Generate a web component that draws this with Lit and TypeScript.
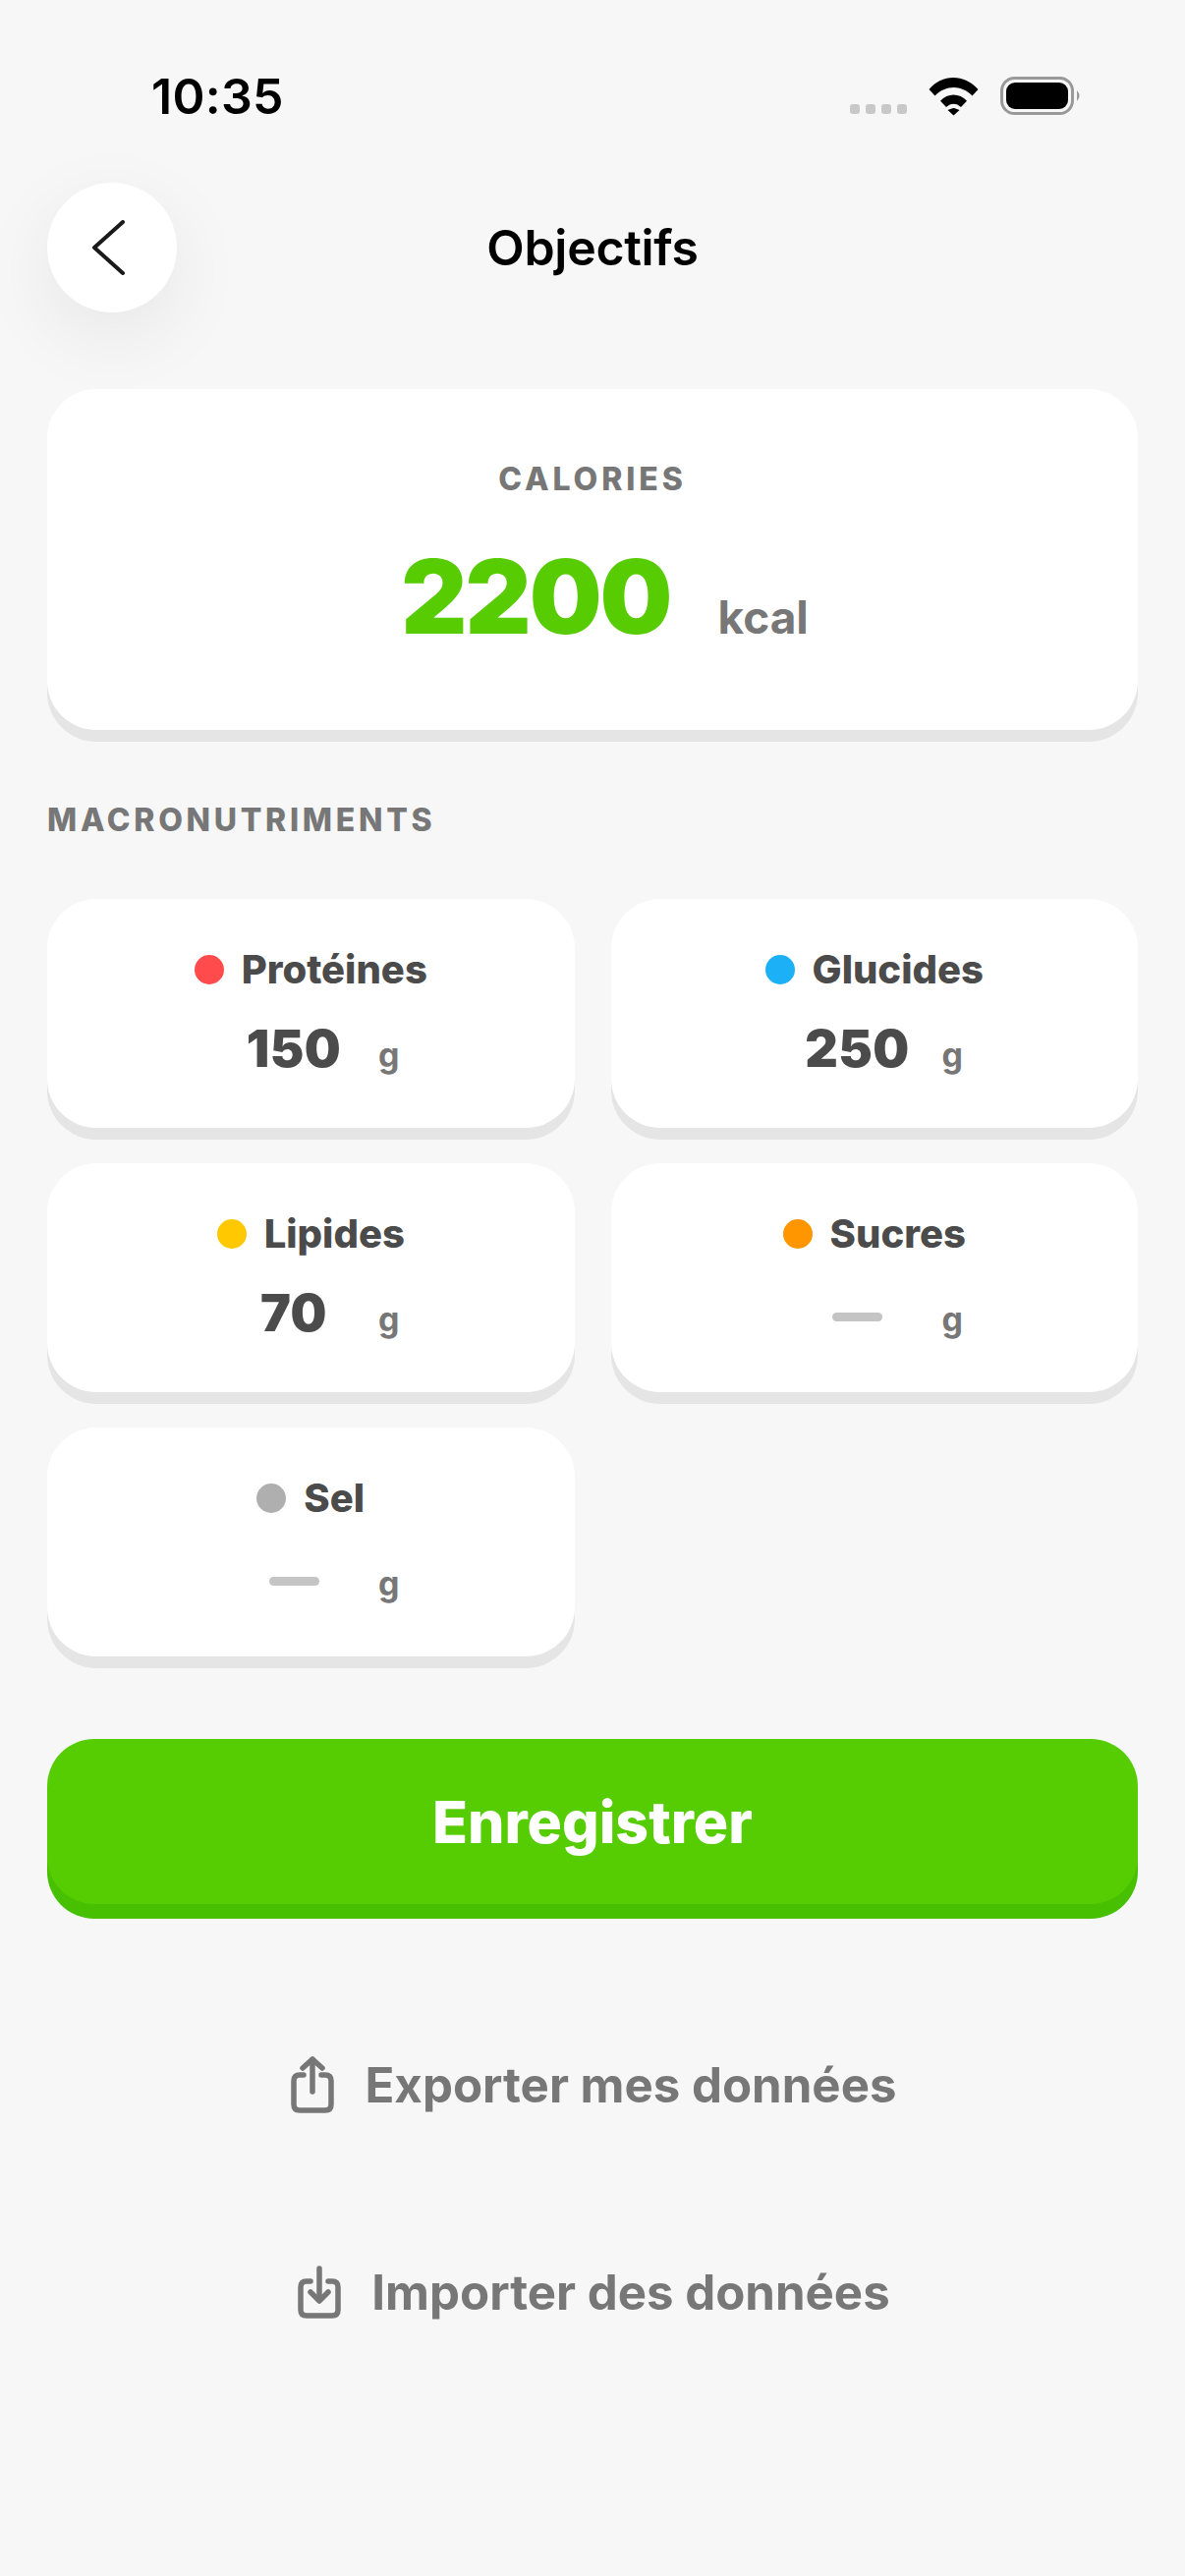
import { LitElement, css, html } from 'lit';
import { customElement } from 'lit/decorators.js';

const macros = [
  { name: 'Protéines', color: '#ff4b4b', value: '150' },
  { name: 'Glucides', color: '#1cb0f6', value: '250' },
  { name: 'Lipides', color: '#ffc800', value: '70' },
  { name: 'Sucres', color: '#ff9600', value: '' },
  { name: 'Sel', color: '#afafaf', value: '' },
];

@customElement('app-root')
export class AppRoot extends LitElement {
  static styles = css`
    :host {
      display: block;
      width: 1206px;
      height: 2622px;
      background: #f7f7f7;
      font-family: Inter, 'Noto Sans', sans-serif;
      overflow: hidden;
    }

    .status {
      height: 186px;
      box-sizing: border-box;
      padding: 68px 106px 0 154px;
      display: flex;
      justify-content: space-between;
      align-items: flex-start;
    }

    .time {
      font-size: 50px;
      line-height: 60px;
      font-weight: 600;
      letter-spacing: 0.3px;
      color: #000;
    }

    .status-icons {
      display: flex;
      align-items: flex-start;
      padding-top: 10px;
    }

    .header {
      position: relative;
      height: 132px;
      display: flex;
      align-items: center;
      justify-content: center;
    }

    .back {
      position: absolute;
      left: 48px;
      top: 0;
      width: 132px;
      height: 132px;
      border-radius: 50%;
      background: #fff;
      box-shadow: 0 24px 80px rgba(0, 0, 0, 0.07);
      display: flex;
      align-items: center;
      justify-content: center;
    }

    .back svg {
      margin-right: 9px;
    }

    .title {
      font-size: 50px;
      font-weight: 600;
      color: #000;
      letter-spacing: -0.3px;
    }

    .content {
      padding: 78px 48px 0;
    }

    .card {
      background: #fff;
      border-radius: 50px;
      box-shadow: 0 12px 0 #e5e5e5;
    }

    .calories {
      position: relative;
      height: 347px;
      box-sizing: border-box;
      padding-top: 72px;
      display: flex;
      flex-direction: column;
      align-items: center;
    }

    .calories-label {
      font-size: 32px;
      line-height: 40px;
      font-weight: 800;
      letter-spacing: 3.9px;
      color: #777;
    }

    .calories-row {
      display: flex;
      align-items: baseline;
      gap: 48px;
      margin-top: 36px;
      padding-left: 25px;
    }

    .calories-value {
      font-size: 104px;
      line-height: 126px;
      font-weight: 900;
      letter-spacing: -2px;
      color: #58cc02;
    }

    .calories-unit {
      font-size: 46px;
      font-weight: 700;
      color: #777;
    }

    .section {
      margin: 72px 0 0;
      font-size: 32px;
      line-height: 40px;
      font-weight: 800;
      letter-spacing: 3.7px;
      color: #777;
    }

    .grid {
      display: grid;
      grid-template-columns: 1fr 1fr;
      column-gap: 37px;
      row-gap: 36px;
      margin-top: 60px;
    }

    .macro {
      height: 233px;
      box-sizing: border-box;
      padding-top: 49px;
      display: flex;
      flex-direction: column;
      align-items: center;
    }

    .macro-head {
      display: flex;
      align-items: center;
      gap: 18px;
      height: 46px;
    }

    .dot {
      width: 30px;
      height: 30px;
      border-radius: 50%;
    }

    .macro-name {
      font-size: 40px;
      line-height: 46px;
      font-weight: 800;
      color: #4b4b4b;
    }

    .macro-row {
      display: flex;
      align-items: baseline;
      gap: 13px;
      margin-top: 20px;
      height: 76px;
    }

    .macro-value {
      width: 146px;
      text-align: center;
      font-size: 52px;
      line-height: 76px;
      font-weight: 900;
      letter-spacing: 0.4px;
      color: #4b4b4b;
    }

    .dash {
      display: inline-block;
      width: 51px;
      height: 9px;
      vertical-align: 10px;
      border-radius: 5px;
      background: #c4c4c4;
    }

    .macro-unit {
      font-size: 34px;
      font-weight: 700;
      color: #777;
    }

    .save {
      margin-top: 84px;
      height: 168px;
      border-radius: 48px;
      background: #56cd02;
      box-shadow: 0 15px 0 #46c000;
      display: flex;
      align-items: center;
      justify-content: center;
      font-size: 59px;
      font-weight: 800;
      color: #fff;
    }

    .links {
      display: flex;
      flex-direction: column;
      align-items: center;
      gap: 149px;
      margin-top: 153px;
      padding-left: 3px;
    }

    .link {
      display: flex;
      align-items: center;
      height: 62px;
      gap: 31px;
      font-size: 49.2px;
      font-weight: 700;
      color: #777;
    }

    .link svg {
      flex: none;
    }
  `;

  private statusIcons() {
    return html`
      <svg width="236" height="40" viewBox="0 0 236 40">
        <g fill="#c8c8c8">
          <rect x="1" y="28" width="10" height="10" rx="3"></rect>
          <rect x="17" y="28" width="10" height="10" rx="3"></rect>
          <rect x="33" y="28" width="10" height="10" rx="3"></rect>
          <rect x="49" y="28" width="10" height="10" rx="3"></rect>
        </g>
        <path
          d="M81.500 13 C94.500 -3 117.500 -3 131.500 13 L125.500 19.500 C114.500 8 98.500 8 87.500 19.500 Z M93 24.800 C100.500 16.500 112.500 16.500 120 24.800 L114 31 C109.500 26.500 103.500 26.500 99 31 Z M104.500 32.500 C105.800 31.800 107.200 31.800 108.500 32.500 L112.500 34 L106.500 39.500 L100.500 34 Z"
          fill="#000"
        ></path>
        <rect x="155.500" y="1.500" width="72" height="36" rx="13" fill="none" stroke="#999" stroke-width="3"></rect>
        <rect x="160" y="6" width="63" height="27" rx="9" fill="#000"></rect>
        <path d="M232 14 Q237 19.500 232 25 Z" fill="#999"></path>
      </svg>
    `;
  }

  private exportIcon() {
    return html`
      <svg width="44" height="58" viewBox="0 0 44 58" fill="none" stroke="#777" stroke-width="5.500" stroke-linecap="round" stroke-linejoin="round">
        <path d="M13 19 H9 Q3 19 3 25 V49 Q3 55 9 55 H35 Q41 55 41 49 V25 Q41 19 35 19 H31"></path>
        <path d="M22 36 V3"></path>
        <path d="M12 12 L22 3 L32 12"></path>
      </svg>
    `;
  }

  private importIcon() {
    return html`
      <svg width="44" height="54" viewBox="0 0 44 54" fill="none" stroke="#777" stroke-width="5.500" stroke-linecap="round" stroke-linejoin="round">
        <path d="M13 16 H9 Q3 16 3 22 V45 Q3 51 9 51 H35 Q41 51 41 45 V22 Q41 16 35 16 H31"></path>
        <path d="M22 3 V35"></path>
        <path d="M13 27 L22 36 L31 27"></path>
      </svg>
    `;
  }

  render() {
    return html`
      <div class="status">
        <div class="time">10:35</div>
        <div class="status-icons">${this.statusIcons()}</div>
      </div>

      <div class="header">
        <div class="back">
          <svg width="36" height="56" viewBox="0 0 36 56" fill="none" stroke="#1a1a1a" stroke-width="4" stroke-linecap="round" stroke-linejoin="round">
            <path d="M33 2 L4 28 L33 54"></path>
          </svg>
        </div>
        <div class="title">Objectifs</div>
      </div>

      <div class="content">
        <div class="card calories">
          <div class="calories-label">CALORIES</div>
          <div class="calories-row">
            <span class="calories-value">2200</span>
            <span class="calories-unit">kcal</span>
          </div>
        </div>

        <div class="section">MACRONUTRIMENTS</div>

        <div class="grid">
          ${macros.map(
            (m) => html`
              <div class="card macro">
                <div class="macro-head">
                  <span class="dot" style="background: ${m.color}"></span>
                  <span class="macro-name">${m.name}</span>
                </div>
                <div class="macro-row">
                  <span class="macro-value">${m.value || html`<span class="dash"></span>`}</span>
                  <span class="macro-unit">g</span>
                </div>
              </div>
            `,
          )}
        </div>

        <div class="save">Enregistrer</div>

        <div class="links">
          <div class="link">${this.exportIcon()}<span>Exporter mes données</span></div>
          <div class="link">${this.importIcon()}<span>Importer des données</span></div>
        </div>
      </div>
    `;
  }
}
